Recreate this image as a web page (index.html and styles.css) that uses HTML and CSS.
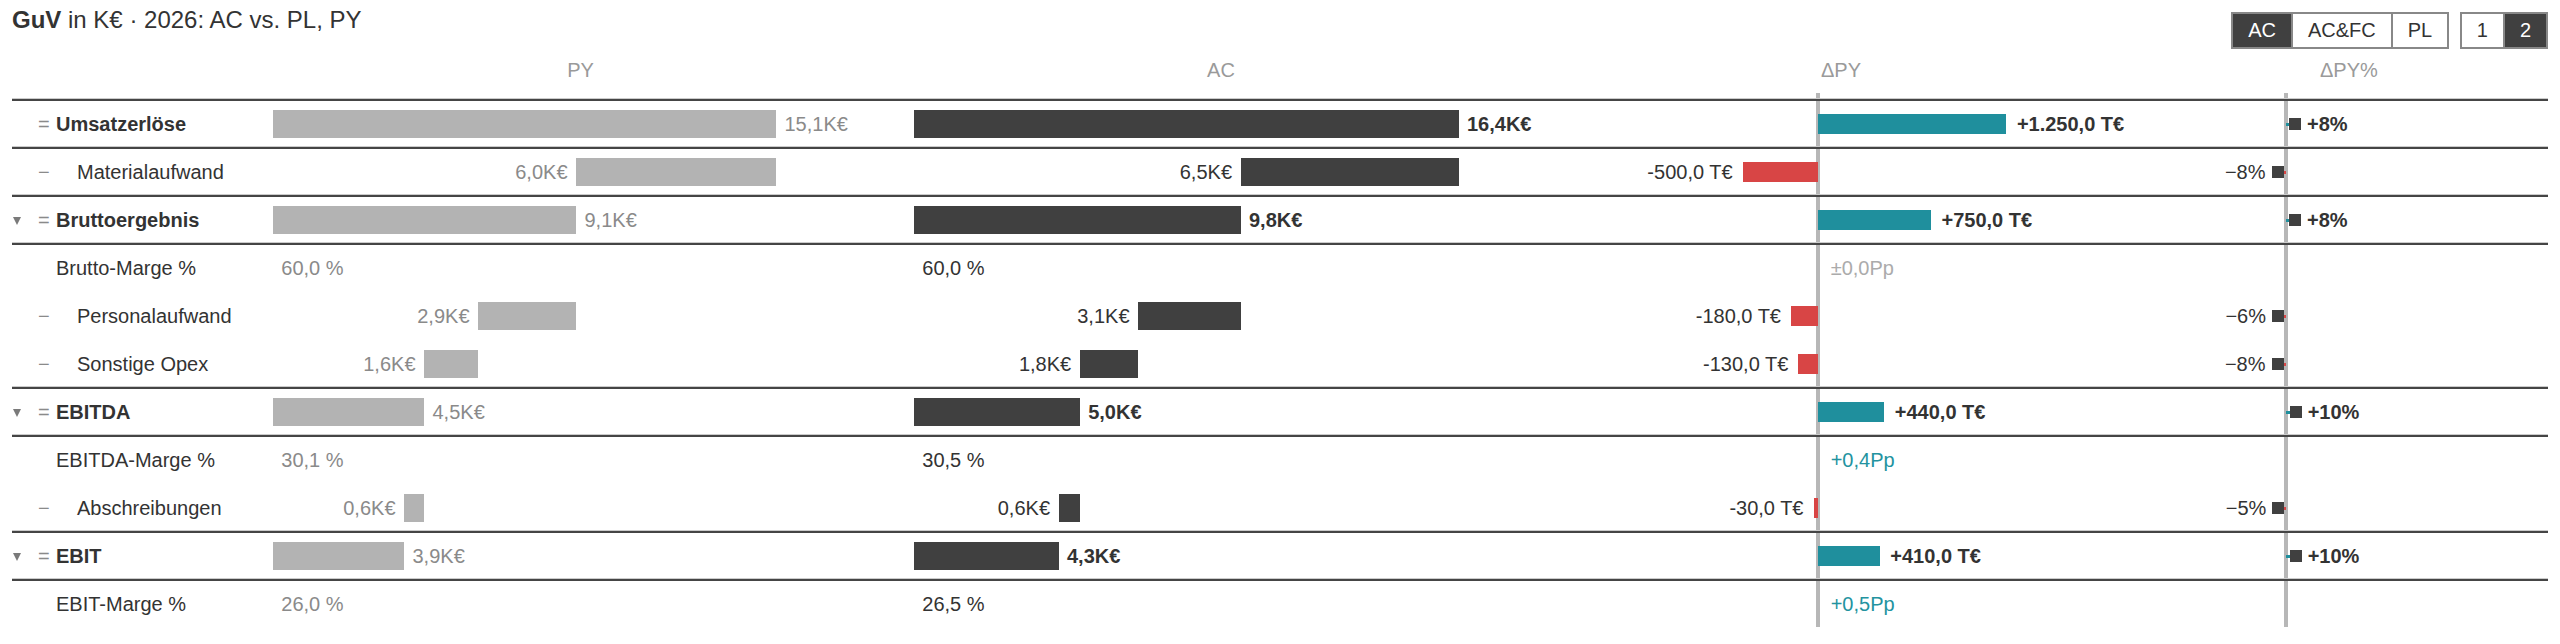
FILE: index.html
```html
<!DOCTYPE html>
<html lang="de">
<head>
<meta charset="utf-8">
<title>GuV</title>
<link rel="stylesheet" href="styles.css">
</head>
<body>
<div class="page">
  <div class="topbar">
    <div class="title"><b>GuV</b> in K€ · 2026: AC vs. PL, PY</div>
    <div class="toggles">
      <div class="seg"><span class="on">AC</span><span>AC&amp;FC</span><span>PL</span></div>
      <div class="seg"><span>1</span><span class="on">2</span></div>
    </div>
  </div>

  <div class="table">
    <div class="axis ax1"></div>
    <div class="axis ax2"></div>

    <div class="head">
      <div></div>
      <div class="h-c">PY</div>
      <div class="h-c">AC</div>
      <div class="h-d">ΔPY</div>
      <div class="h-dp">ΔPY%</div>
    </div>

    <!-- Umsatzerlöse -->
    <div class="row sum ruled">
      <div class="lab"><span class="tw"></span><span class="sign">=</span><span class="t">Umsatzerlöse</span></div>
      <div class="bc py"><div class="bar" style="width:503px"></div><span class="v">15,1K€</span></div>
      <div class="bc ac"><div class="bar" style="width:544.5px"></div><span class="v">16,4K€</span></div>
      <div class="dc"><div class="neg"></div><div class="pos"><div class="dbar up" style="width:188.4px"></div><span class="v">+1.250,0 T€</span></div></div>
      <div class="pc"><div class="neg"></div><div class="pos"><div class="stem up" style="width:3px"></div><div class="sq"></div><span class="v">+8%</span></div></div>
    </div>

    <!-- Materialaufwand -->
    <div class="row child ruled">
      <div class="lab"><span class="tw"></span><span class="sign">−</span><span class="t">Materialaufwand</span></div>
      <div class="bc py"><div class="lead" style="width:303px"><span class="v">6,0K€</span></div><div class="bar" style="width:200px"></div></div>
      <div class="bc ac"><div class="lead" style="width:326.5px"><span class="v">6,5K€</span></div><div class="bar" style="width:218px"></div></div>
      <div class="dc"><div class="neg"><span class="v">-500,0 T€</span><div class="dbar down" style="width:75.4px"></div></div><div class="pos"></div></div>
      <div class="pc"><div class="neg"><span class="v">−8%</span><div class="sq"></div><div class="stem down" style="width:2.5px"></div></div><div class="pos"></div></div>
    </div>

    <!-- Bruttoergebnis -->
    <div class="row sum ruled">
      <div class="lab"><span class="tw"><i class="tri"></i></span><span class="sign">=</span><span class="t">Bruttoergebnis</span></div>
      <div class="bc py"><div class="bar" style="width:303px"></div><span class="v">9,1K€</span></div>
      <div class="bc ac"><div class="bar" style="width:326.5px"></div><span class="v">9,8K€</span></div>
      <div class="dc"><div class="neg"></div><div class="pos"><div class="dbar up" style="width:113px"></div><span class="v">+750,0 T€</span></div></div>
      <div class="pc"><div class="neg"></div><div class="pos"><div class="stem up" style="width:3px"></div><div class="sq"></div><span class="v">+8%</span></div></div>
    </div>

    <!-- Brutto-Marge -->
    <div class="row margin ruled">
      <div class="lab"><span class="tw"></span><span class="sign"></span><span class="t">Brutto-Marge %</span></div>
      <div class="bc py"><span class="v pct">60,0 %</span></div>
      <div class="bc ac"><span class="v pct">60,0 %</span></div>
      <div class="dc"><div class="neg"></div><div class="pos"><span class="pp zero">±0,0Pp</span></div></div>
      <div class="pc"></div>
    </div>

    <!-- Personalaufwand -->
    <div class="row child">
      <div class="lab"><span class="tw"></span><span class="sign">−</span><span class="t">Personalaufwand</span></div>
      <div class="bc py"><div class="lead" style="width:205px"><span class="v">2,9K€</span></div><div class="bar" style="width:98px"></div></div>
      <div class="bc ac"><div class="lead" style="width:224px"><span class="v">3,1K€</span></div><div class="bar" style="width:102.5px"></div></div>
      <div class="dc"><div class="neg"><span class="v">-180,0 T€</span><div class="dbar down" style="width:27px"></div></div><div class="pos"></div></div>
      <div class="pc"><div class="neg"><span class="v">−6%</span><div class="sq"></div><div class="stem down" style="width:2px"></div></div><div class="pos"></div></div>
    </div>

    <!-- Sonstige Opex -->
    <div class="row child">
      <div class="lab"><span class="tw"></span><span class="sign">−</span><span class="t">Sonstige Opex</span></div>
      <div class="bc py"><div class="lead" style="width:151px"><span class="v">1,6K€</span></div><div class="bar" style="width:54px"></div></div>
      <div class="bc ac"><div class="lead" style="width:165.7px"><span class="v">1,8K€</span></div><div class="bar" style="width:58.3px"></div></div>
      <div class="dc"><div class="neg"><span class="v">-130,0 T€</span><div class="dbar down" style="width:19.7px"></div></div><div class="pos"></div></div>
      <div class="pc"><div class="neg"><span class="v">−8%</span><div class="sq"></div><div class="stem down" style="width:2.5px"></div></div><div class="pos"></div></div>
    </div>

    <!-- EBITDA -->
    <div class="row sum ruled">
      <div class="lab"><span class="tw"><i class="tri"></i></span><span class="sign">=</span><span class="t">EBITDA</span></div>
      <div class="bc py"><div class="bar" style="width:151px"></div><span class="v">4,5K€</span></div>
      <div class="bc ac"><div class="bar" style="width:165.7px"></div><span class="v">5,0K€</span></div>
      <div class="dc"><div class="neg"></div><div class="pos"><div class="dbar up" style="width:66.3px"></div><span class="v">+440,0 T€</span></div></div>
      <div class="pc"><div class="neg"></div><div class="pos"><div class="stem up" style="width:3.7px"></div><div class="sq"></div><span class="v">+10%</span></div></div>
    </div>

    <!-- EBITDA-Marge -->
    <div class="row margin ruled">
      <div class="lab"><span class="tw"></span><span class="sign"></span><span class="t">EBITDA-Marge %</span></div>
      <div class="bc py"><span class="v pct">30,1 %</span></div>
      <div class="bc ac"><span class="v pct">30,5 %</span></div>
      <div class="dc"><div class="neg"></div><div class="pos"><span class="pp up">+0,4Pp</span></div></div>
      <div class="pc"></div>
    </div>

    <!-- Abschreibungen -->
    <div class="row child">
      <div class="lab"><span class="tw"></span><span class="sign">−</span><span class="t">Abschreibungen</span></div>
      <div class="bc py"><div class="lead" style="width:131px"><span class="v">0,6K€</span></div><div class="bar" style="width:20px"></div></div>
      <div class="bc ac"><div class="lead" style="width:144.5px"><span class="v">0,6K€</span></div><div class="bar" style="width:21.2px"></div></div>
      <div class="dc"><div class="neg"><span class="v">-30,0 T€</span><div class="dbar down" style="width:4.5px"></div></div><div class="pos"></div></div>
      <div class="pc"><div class="neg"><span class="v">−5%</span><div class="sq"></div><div class="stem down" style="width:1.7px"></div></div><div class="pos"></div></div>
    </div>

    <!-- EBIT -->
    <div class="row sum ruled">
      <div class="lab"><span class="tw"><i class="tri"></i></span><span class="sign">=</span><span class="t">EBIT</span></div>
      <div class="bc py"><div class="bar" style="width:131px"></div><span class="v">3,9K€</span></div>
      <div class="bc ac"><div class="bar" style="width:144.5px"></div><span class="v">4,3K€</span></div>
      <div class="dc"><div class="neg"></div><div class="pos"><div class="dbar up" style="width:61.8px"></div><span class="v">+410,0 T€</span></div></div>
      <div class="pc"><div class="neg"></div><div class="pos"><div class="stem up" style="width:3.7px"></div><div class="sq"></div><span class="v">+10%</span></div></div>
    </div>

    <!-- EBIT-Marge -->
    <div class="row margin ruled">
      <div class="lab"><span class="tw"></span><span class="sign"></span><span class="t">EBIT-Marge %</span></div>
      <div class="bc py"><span class="v pct">26,0 %</span></div>
      <div class="bc ac"><span class="v pct">26,5 %</span></div>
      <div class="dc"><div class="neg"></div><div class="pos"><span class="pp up">+0,5Pp</span></div></div>
      <div class="pc"></div>
    </div>
  </div>
</div>
</body>
</html>
```

FILE: styles.css
```css
* { box-sizing: border-box; }

html, body {
  margin: 0;
  padding: 0;
  background: #ffffff;
}

body {
  font-family: "Liberation Sans", Arial, sans-serif;
  font-size: 20px;
  color: #333333;
  white-space: nowrap;
}

.page {
  width: 2560px;
  padding: 0 12px;
}

/* ---------- top bar ---------- */
.topbar {
  display: flex;
  justify-content: space-between;
  align-items: flex-start;
  height: 52px;
}

.title {
  margin-top: 6px;
  font-size: 24px;
  line-height: 28px;
  color: #333333;
}

.title b { font-weight: 700; }

.toggles {
  display: flex;
  gap: 10.5px;
  margin-top: 12px;
}

.seg {
  display: flex;
  height: 37px;
  border: 2px solid #888888;
}

.seg span {
  padding: 0 15px;
  line-height: 33px;
  color: #333333;
  background: #ffffff;
}

.seg span + span { border-left: 2px solid #888888; }

.seg span.on {
  background: #404040;
  color: #ffffff;
}

/* ---------- table ---------- */
.table { position: relative; }

.axis {
  position: absolute;
  top: 41px;
  bottom: 0;
  width: 4px;
  background: #b7b7b7;
}

.ax1 { left: 1804px; }
.ax2 { left: 2272px; }

.head,
.row {
  position: relative;
  display: grid;
  grid-template-columns: 248px 641px 640px 559px 448px;
}

.head {
  height: 47px;
  padding-top: 6.5px;
  line-height: 23px;
  color: #9a9a9a;
}

.head .h-c { text-align: center; }
.head .h-d { padding-left: 280px; }
.head .h-dp { padding-left: 220px; }

.row {
  height: 48px;
  border-top: 2px solid transparent;
  align-items: center;
  line-height: 23px;
}

.row.ruled {
  border-top-color: #454545;
  box-shadow: 0 -1px 0 #cbcbcb;
}

/* label column */
.lab {
  display: flex;
  align-items: center;
}

.tw {
  flex: none;
  width: 26px;
  display: flex;
  align-items: center;
}

.tri {
  display: block;
  width: 0;
  height: 0;
  margin-left: 1px;
  margin-top: 2px;
  border-left: 4px solid transparent;
  border-right: 4px solid transparent;
  border-top: 8px solid #7a7a7a;
}

.sign {
  flex: none;
  width: 18px;
  color: #8a8a8a;
}

.row.sum .lab .t { font-weight: 700; }
.row.child .lab .t { margin-left: 21px; }

/* PY / AC bar cells */
.bc {
  display: flex;
  align-items: center;
  padding-left: 13px;
}

.lead {
  flex: none;
  display: flex;
  justify-content: flex-end;
  padding-right: 8.5px;
}

.bar {
  flex: none;
  height: 28px;
}

.py .bar { background: #b3b3b3; }
.ac .bar { background: #404040; }

.py .v { color: #8a8a8a; }
.ac .v { color: #333333; }

.bar + .v { margin-left: 8.5px; }
.row.sum .ac .v { font-weight: 700; }

.pct { margin-left: 8.3px; }

/* delta PY cells */
.dc,
.pc {
  display: flex;
  align-items: center;
}

.dc .neg,
.pc .neg {
  flex: none;
  display: flex;
  justify-content: flex-end;
  align-items: center;
}

.dc .neg { width: 277px; }
.pc .neg { width: 186px; }

.dc .pos,
.pc .pos {
  flex: 1;
  display: flex;
  align-items: center;
}

.dbar {
  flex: none;
  height: 20px;
}

.dbar.up { background: #1f8f9d; }
.dbar.down { background: #d84545; }

.dc .neg .v { margin-right: 10px; }
.dc .pos .v { margin-left: 10.5px; }

.row.sum .dc .v,
.row.sum .pc .v { font-weight: 700; }

.pp { margin-left: 12.7px; }
.pp.zero { color: #ababab; }
.pp.up { color: #2393a0; }

/* delta PY% pins */
.stem {
  flex: none;
  height: 3px;
}

.stem.up { background: #1f8f9d; }
.stem.down { background: #d84545; }

.sq {
  flex: none;
  width: 12px;
  height: 12px;
  background: #404040;
}

.pc .neg .v { margin-right: 6px; }
.pc .pos .v { margin-left: 6px; }
```
